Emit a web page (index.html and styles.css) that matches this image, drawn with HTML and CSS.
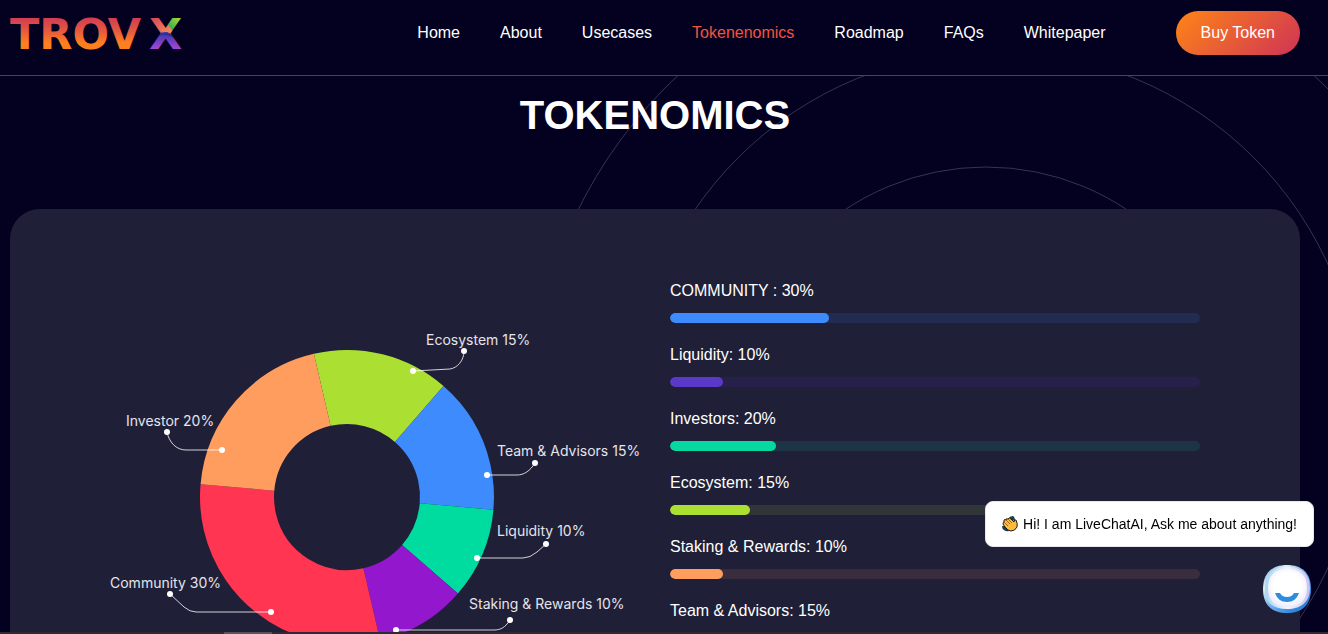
FILE: index.html
```html
<!DOCTYPE html>
<html lang="en">

<head>
    <meta charset="UTF-8">
    <meta name="viewport" content="width=device-width, initial-scale=1.0">
    <title>TROVX - Tokenomics</title>
    <link rel="stylesheet" href="styles.css">
</head>

<body>
    <header class="header">
        <a href="#" class="logo" aria-label="TROVX">
            <svg width="180" height="44" viewBox="0 -6 180 44">
                <defs>
                    <linearGradient id="logo-warm" x1="0" y1="0" x2="0" y2="32" gradientUnits="userSpaceOnUse">
                        <stop offset="0" stop-color="#d03a55" />
                        <stop offset="0.45" stop-color="#e65a3f" />
                        <stop offset="0.8" stop-color="#ff7f1f" />
                    </linearGradient>
                    <linearGradient id="limb-red" x1="0" y1="0" x2="1" y2="1">
                        <stop offset="0" stop-color="#d03a55" />
                        <stop offset="1" stop-color="#f79a5c" />
                    </linearGradient>
                    <linearGradient id="limb-green" x1="0" y1="1" x2="1" y2="0">
                        <stop offset="0.3" stop-color="#2fa84f" />
                        <stop offset="1" stop-color="#d8f02a" />
                    </linearGradient>
                    <linearGradient id="limb-purple" x1="0" y1="0" x2="0" y2="1">
                        <stop offset="0" stop-color="#3a35a8" />
                        <stop offset="1" stop-color="#b04ad8" />
                    </linearGradient>
                    <pattern id="logo-x" x="139" y="-2" width="36" height="36" patternUnits="userSpaceOnUse">
                        <rect width="36" height="36" fill="url(#limb-red)" />
                        <path d="M19 18 L14 12 L20 0 H36 V20 Z" fill="url(#limb-green)" />
                        <path d="M12 0 L26 19 L14 19 L0 2 V0 Z" fill="url(#limb-red)" />
                        <path d="M0 36 V26 Q10 16 18 17 Q26 19 36 34 V36 Z" fill="url(#limb-purple)" />
                        <path d="M9 21 Q19 14 28 25 Q19 18 9 21 Z" fill="#26308c" />
                    </pattern>
                </defs>
                <text class="logo-text" x="0" y="32" fill="url(#logo-warm)">TROV</text>
                <text class="logo-text" x="139" y="32" fill="url(#logo-x)">X</text>
            </svg>
        </a>
        <nav class="nav">
            <a href="#home">Home</a>
            <a href="#about">About</a>
            <a href="#usecases">Usecases</a>
            <a href="#tokenomics" class="active">Tokenenomics</a>
            <a href="#roadmap">Roadmap</a>
            <a href="#faqs">FAQs</a>
            <a href="#whitepaper">Whitepaper</a>
        </nav>
        <button type="button" class="btn-buy">Buy Token</button>
    </header>

    <main class="tokenomics" id="tokenomics">
        <svg class="rings" width="940" height="940" viewBox="0 0 940 940" aria-hidden="true">
            <circle cx="470" cy="470" r="466" />
            <circle cx="470" cy="470" r="365" />
            <circle cx="460" cy="475" r="254" />
        </svg>

        <h1>TOKENOMICS</h1>

        <div class="panel">
            <svg class="chart" viewBox="0 0 530 400" role="img" aria-label="Token distribution">
                <!-- every slice is a dash on the same circle, 100 units long -->
                <g class="slices" transform="rotate(-103 237 218)">
                    <circle class="slice-ecosystem" cx="237" cy="218" r="110" pathLength="100" stroke-dasharray="15 85" />
                    <circle class="slice-team" cx="237" cy="218" r="110" pathLength="100" stroke-dasharray="15 85" stroke-dashoffset="-15" />
                    <circle class="slice-liquidity" cx="237" cy="218" r="110" pathLength="100" stroke-dasharray="10 90" stroke-dashoffset="-30" />
                    <circle class="slice-staking" cx="237" cy="218" r="110" pathLength="100" stroke-dasharray="10 90" stroke-dashoffset="-40" />
                    <circle class="slice-community" cx="237" cy="218" r="110" pathLength="100" stroke-dasharray="30 70" stroke-dashoffset="-50" />
                    <circle class="slice-investor" cx="237" cy="218" r="110" pathLength="100" stroke-dasharray="20 80" stroke-dashoffset="-80" />
                </g>
                <g class="leaders">
                    <path d="M354 72 C354 82 347 89 340 90 L303 92" />
                    <path d="M425 184 C420 192 414 196 407 196 H377" />
                    <path d="M436 265 L427 273 Q420 279 413 279 H367" />
                    <path d="M400 341 C395 349 390 351 384 351 H286" />
                    <path d="M57 153 C59 163 66 171 76 171 H112" />
                    <path d="M60 315 L74 328 Q80 333 86 333 H161" />
                </g>
                <g class="dots">
                    <circle cx="354" cy="72" r="3" />
                    <circle cx="303" cy="92" r="3" />
                    <circle cx="425" cy="184" r="3" />
                    <circle cx="377" cy="196" r="3" />
                    <circle cx="436" cy="265" r="3" />
                    <circle cx="367" cy="279" r="3" />
                    <circle cx="400" cy="341" r="3" />
                    <circle cx="286" cy="351" r="3" />
                    <circle cx="57" cy="153" r="3" />
                    <circle cx="112" cy="171" r="3" />
                    <circle cx="60" cy="315" r="3" />
                    <circle cx="161" cy="333" r="3" />
                </g>
                <g class="chart-labels">
                    <text x="316" y="66">Ecosystem 15%</text>
                    <text x="387" y="177">Team &amp; Advisors 15%</text>
                    <text x="387" y="257">Liquidity 10%</text>
                    <text x="359" y="330">Staking &amp; Rewards 10%</text>
                    <text x="16" y="147">Investor 20%</text>
                    <text x="0" y="309">Community 30%</text>
                </g>
            </svg>

            <ul class="shares">
                <li class="share blue">
                    <span>COMMUNITY : 30%</span>
                    <div class="bar"><div class="bar-fill" style="width: 30%"></div></div>
                </li>
                <li class="share violet">
                    <span>Liquidity: 10%</span>
                    <div class="bar"><div class="bar-fill" style="width: 10%"></div></div>
                </li>
                <li class="share teal">
                    <span>Investors: 20%</span>
                    <div class="bar"><div class="bar-fill" style="width: 20%"></div></div>
                </li>
                <li class="share lime">
                    <span>Ecosystem: 15%</span>
                    <div class="bar"><div class="bar-fill" style="width: 15%"></div></div>
                </li>
                <li class="share orange">
                    <span>Staking &amp; Rewards: 10%</span>
                    <div class="bar"><div class="bar-fill" style="width: 10%"></div></div>
                </li>
                <li class="share red">
                    <span>Team &amp; Advisors: 15%</span>
                    <div class="bar"><div class="bar-fill" style="width: 15%"></div></div>
                </li>
            </ul>
        </div>
    </main>

    <div class="chat">
        <div class="chat-message">
            <svg width="16" height="16" viewBox="0 0 16 16" aria-hidden="true">
                <path d="M7 2 Q8 0 11 0 Q13 1 13 5 L10 4 Z M0 10 Q0 13 2 14 Q4 16 7 15 L3 10 Z" fill="#173f4f" />
                <path d="M2 4 Q3 3 4 4 Q4 2 6 3 Q7 1 9 3 L12 6 Q12 3 14 4 Q16 8 15 11 Q13 15 9 15 Q6 15 3 11 L1 8 Q1 6 2 6 Z" fill="#fdbb3d" stroke="#1d1d1b" stroke-width="1" stroke-linejoin="round" />
                <path d="M4 4 L8 8 M6 3 L10 7 M2 6 L6 10" stroke="#a66a14" stroke-width="1" fill="none" />
            </svg>
            <span>Hi! I am LiveChatAI, Ask me about anything!</span>
        </div>
        <button type="button" class="chat-btn" aria-label="Open chat">
            <svg width="50" height="50" viewBox="0 0 50 50">
                <defs>
                    <linearGradient id="chat-rim" x1="0" y1="0" x2="1" y2="1">
                        <stop offset="0" stop-color="#5fa3e6" />
                        <stop offset="0.25" stop-color="#dff1ee" />
                        <stop offset="0.5" stop-color="#6fb2f2" />
                        <stop offset="0.8" stop-color="#2f86d8" />
                        <stop offset="1" stop-color="#2a73c4" />
                    </linearGradient>
                    <linearGradient id="chat-edge" x1="0" y1="0" x2="1" y2="0">
                        <stop offset="0" stop-color="#a8d4f5" />
                        <stop offset="0.5" stop-color="#f4f4ff" />
                        <stop offset="1" stop-color="#c9bff2" />
                    </linearGradient>
                    <radialGradient id="chat-face" cx="0.5" cy="0.45" r="0.6">
                        <stop offset="0.6" stop-color="#ffffff" />
                        <stop offset="1" stop-color="#e8e9fa" />
                    </radialGradient>
                </defs>
                <path d="M25 1 C40 1 49 9 49 25 C49 41 40 49 25 49 C10 49 1 41 1 25 C1 9 10 1 25 1 Z" fill="url(#chat-rim)" />
                <path d="M26 3 C40 3 48 10 48 24 C48 38 39 45 25 45 C11 45 3 39 3 25 C3 10 12 3 26 3 Z" fill="url(#chat-edge)" />
                <path d="M25 5 C38 5 45 11 45 24 C45 37 37 43 25 43 C13 43 6 37 6 24 C6 11 13 5 25 5 Z" fill="url(#chat-face)" />
                <path d="M13 29 H18 Q20 33 25 33 Q30 33 32 29 H37 Q34 38 25 38 Q16 38 13 29 Z" fill="#2d8be0" />
            </svg>
        </button>
    </div>

    <div class="bottom-strip"></div>
</body>

</html>
```

FILE: styles.css
```css
* {
    margin: 0;
    padding: 0;
    box-sizing: border-box;
}

body {
    font-family: "Liberation Sans", Arial, sans-serif;
    font-size: 16px;
    line-height: 24px;
    background: #040020;
    color: #fff;
    height: 100vh;
    overflow: hidden;
}

.header {
    display: flex;
    align-items: center;
    padding: 11px 28px 20px 10px;
    border-bottom: 1px solid #47406f;
}

.logo {
    display: flex;
}

.logo svg {
    overflow: visible;
}

.logo-text {
    font-family: "DejaVu Sans", sans-serif;
    font-weight: bold;
    font-size: 43px;
}

.nav {
    display: flex;
    gap: 40px;
    margin-left: auto;
}

.nav a {
    color: #fff;
    text-decoration: none;
}

.nav a.active,
.nav a:hover {
    color: #f4543f;
}

.btn-buy {
    margin-left: 70px;
    padding: 10px 25px;
    border: none;
    border-radius: 22px;
    background: linear-gradient(135deg, #ff8516 0%, #cf3356 100%);
    color: #fff;
    font: inherit;
    cursor: pointer;
}

.tokenomics {
    position: relative;
    padding: 15px 28px 0 10px;
    overflow: hidden;
}

/* decorative circles behind the content */
.rings {
    position: absolute;
    top: -130px;
    right: -138px;
    fill: none;
    stroke: #383253;
    stroke-width: 1;
}

h1 {
    position: relative;
    font-size: 40px;
    line-height: 48px;
    text-align: center;
    margin-bottom: 70px;
}

.panel {
    position: relative;
    display: grid;
    grid-template-columns: 1fr 1fr;
    align-items: start;
    gap: 30px;
    padding: 70px 100px;
    border-radius: 30px;
    background: #201f38;
}

.chart {
    width: 100%;
    overflow: visible;
}

.slices {
    fill: none;
    stroke-width: 74;
}

.slice-ecosystem {
    stroke: #abe033;
}

.slice-team {
    stroke: #3d8bfd;
}

.slice-liquidity {
    stroke: #00dba0;
}

.slice-staking {
    stroke: #9217cd;
}

.slice-community {
    stroke: #ff3552;
}

.slice-investor {
    stroke: #ff9d5e;
}

.leaders {
    fill: none;
    stroke: rgba(255, 255, 255, 0.8);
    stroke-width: 1;
}

.dots {
    fill: #fff;
}

.chart-labels {
    font-family: Inter, sans-serif;
    font-size: 14px;
    fill: #e4e4ea;
}

.shares {
    display: flex;
    flex-direction: column;
    gap: 20px;
    list-style: none;
}

.share {
    display: flex;
    flex-direction: column;
    gap: 10px;
}

.bar {
    height: 10px;
    border-radius: 5px;
    overflow: hidden;
}

.bar-fill {
    height: 100%;
    border-radius: 5px;
}

.blue .bar {
    background: #222c50;
}

.blue .bar-fill {
    background: #3d8bfd;
}

.violet .bar {
    background: #26204a;
}

.violet .bar-fill {
    background: #5a38c8;
}

.teal .bar {
    background: #1d3447;
}

.teal .bar-fill {
    background: #06d9a0;
}

.lime .bar {
    background: #303638;
}

.lime .bar-fill {
    background: #abe033;
}

.orange .bar {
    background: #3a2d3e;
}

.orange .bar-fill {
    background: #ff9d5e;
}

.red .bar {
    background: #38213c;
}

.red .bar-fill {
    background: #ff3552;
}

.chat {
    position: fixed;
    right: 14px;
    bottom: 20px;
    display: flex;
    flex-direction: column;
    align-items: flex-end;
    gap: 17px;
}

.chat-message {
    display: flex;
    align-items: center;
    gap: 5px;
    padding: 10px 16px;
    border: 1px solid #e5e7eb;
    border-radius: 8px;
    background: #fff;
    color: #000;
    font-size: 14px;
}

.chat-btn {
    display: flex;
    margin-right: 2px;
    border: none;
    background: none;
    cursor: pointer;
}

.bottom-strip {
    position: fixed;
    left: 0;
    right: 0;
    bottom: 0;
    height: 2px;
    background: linear-gradient(#57545e, #57545e) 224px 0 / 48px 2px no-repeat #2d2a35;
}
```
